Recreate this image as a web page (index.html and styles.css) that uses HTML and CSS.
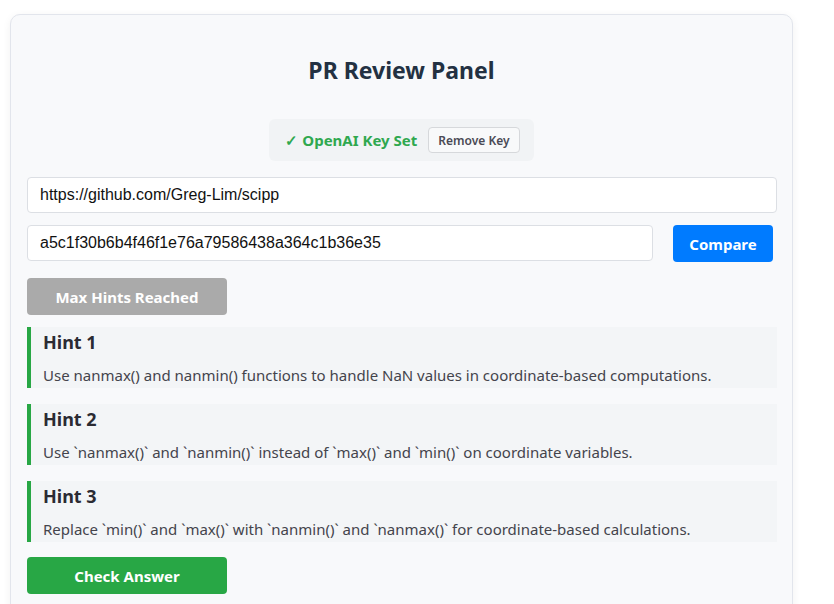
FILE: index.html
```html
<!DOCTYPE html>
<html>
<head>
<meta charset="utf-8">
<link rel="stylesheet" href="styles.css">
</head>
<body>
<div class="card">
  <h2 class="title">PR Review Panel</h2>
  <div class="status-wrap">
    <div class="status">
      <span class="status-text">✓ OpenAI Key Set</span>
      <button class="btn-remove">Remove Key</button>
    </div>
  </div>
  <input class="field" type="text" value="https://github.com/Greg-Lim/scipp">
  <div class="row">
    <input class="field field-grow" type="text" value="a5c1f30b6b4f46f1e76a79586438a364c1b36e35">
    <button class="btn btn-blue">Compare</button>
  </div>
  <button class="btn btn-gray btn-wide">Max Hints Reached</button>
  <div class="hints">
    <div class="hint">
      <h3>Hint 1</h3>
      <p>Use nanmax() and nanmin() functions to handle NaN values in coordinate-based computations.</p>
    </div>
    <div class="hint">
      <h3>Hint 2</h3>
      <p>Use `nanmax()` and `nanmin()` instead of `max()` and `min()` on coordinate variables.</p>
    </div>
    <div class="hint">
      <h3>Hint 3</h3>
      <p>Replace `min()` and `max()` with `nanmin()` and `nanmax()` for coordinate-based calculations.</p>
    </div>
  </div>
  <button class="btn btn-green btn-wide">Check Answer</button>
</div>
</body>
</html>
```

FILE: styles.css
```css
html, body {
  margin: 0;
  padding: 0;
  background: #ffffff;
  font-family: "Noto Sans", "Open Sans", sans-serif;
}
.card {
  box-sizing: border-box;
  width: 783px;
  margin: 14px 0 0 10px;
  padding: 16px 16px 40px;
  background: #f8f9fb;
  border: 1px solid #e2e5ec;
  border-radius: 10px;
  box-shadow: 0 2px 8px rgba(0,0,0,0.06);
}
.title {
  margin: 24px 0 34px;
  font-size: 23px;
  line-height: 30px;
  font-weight: 700;
  color: #233142;
  text-align: center;
}
.status-wrap {
  display: flex;
  justify-content: center;
  margin-bottom: 16px;
}
.status {
  display: flex;
  align-items: center;
  gap: 11px;
  height: 42px;
  padding: 0 14px 0 16px;
  box-sizing: border-box;
  background: #f1f3f5;
  border-radius: 6px;
}
.status-text {
  color: #2fa84f;
  font-weight: 700;
  font-size: 15px;
}
.btn-remove {
  font-family: inherit;
  font-size: 12px;
  font-weight: 600;
  color: #4a4a55;
  background: #f8f9fa;
  border: 1px solid #d6d8db;
  border-radius: 4px;
  height: 26px;
  padding: 0 9px;
}
.field {
  display: block;
  box-sizing: border-box;
  width: 750px;
  height: 36px;
  padding: 0 12px;
  font-family: "Liberation Sans", Arial, sans-serif;
  font-size: 16px;
  color: #111;
  background: #fff;
  border: 1px solid #dcdfe4;
  border-radius: 4px;
}
.row {
  display: flex;
  align-items: flex-start;
  gap: 20px;
  margin-top: 12px;
  margin-bottom: 16px;
}
.field-grow {
  width: 626px;
}
.btn {
  font-family: inherit;
  font-weight: 700;
  font-size: 15px;
  color: #fff;
  border: none;
  border-radius: 4px;
  height: 37px;
}
.btn-blue {
  background: #007bff;
  width: 100px;
}
.btn-gray {
  background: #aaaaaa;
}
.btn-green {
  background: #28a745;
}
.btn-wide {
  display: block;
  width: 200px;
}
.hints {
  display: flex;
  flex-direction: column;
  gap: 16px;
  margin: 12px 0 15px;
}
.hint {
  width: 750px;
  box-sizing: border-box;
  background: #f3f5f7;
  border-left: 4px solid #28a745;
  padding: 2px 12px 2px;
}
.hint h3 {
  margin: 0 0 9px;
  font-size: 18px;
  line-height: 26px;
  font-weight: 700;
  color: #2b2b33;
}
.hint p {
  margin: 0;
  font-size: 15px;
  line-height: 22px;
  color: #44444c;
}
```
